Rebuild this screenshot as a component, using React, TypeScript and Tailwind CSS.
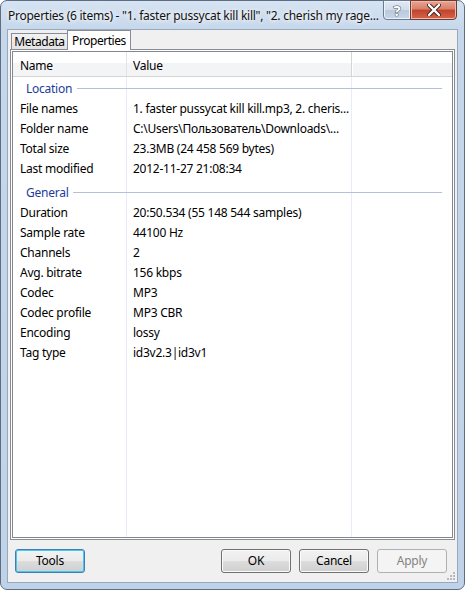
import React from "react";

const font = "font-['Noto_Sans',sans-serif] tracking-[-0.25px]";

const locationRows = [
  ["File names", "1. faster pussycat kill kill.mp3, 2. cheris..."],
  ["Folder name", "C:\\Users\\Пользователь\\Downloads\\..."],
  ["Total size", "23.3MB (24 458 569 bytes)"],
  ["Last modified", "2012-11-27 21:08:34"],
];

const generalRows = [
  ["Duration", "20:50.534 (55 148 544 samples)"],
  ["Sample rate", "44100 Hz"],
  ["Channels", "2"],
  ["Avg. bitrate", "156 kbps"],
  ["Codec", "MP3"],
  ["Codec profile", "MP3 CBR"],
  ["Encoding", "lossy"],
  ["Tag type", "id3v2.3|id3v1"],
];

function GroupRow({ title }: { title: string }) {
  return (
    <div className="flex h-[21px] items-center pl-[13px] pr-[10px]">
      <span className="text-[#1e3c9c]">{title}</span>
      <div className="ml-[5px] h-px flex-1 bg-[#b3c0da]" />
    </div>
  );
}

function DataRow({ name, value }: { name: string; value: string }) {
  return (
    <div className="flex h-[20px] items-center">
      <div className="w-[114px] shrink-0 pl-[7px] whitespace-nowrap">{name}</div>
      <div className="w-[225px] shrink-0 overflow-hidden pl-[6px] whitespace-nowrap">
        {value}
      </div>
    </div>
  );
}

function Button({
  label,
  kind = "normal",
}: {
  label: string;
  kind?: "normal" | "focus" | "disabled";
}) {
  let cls =
    "border-[#707070] bg-[linear-gradient(to_bottom,#f2f2f2_0%,#ebebeb_50%,#dddddd_50%,#cfcfcf_100%)] shadow-[inset_0_0_0_1px_#fbfbfb] text-black";
  if (kind === "focus")
    cls =
      "border-[#3c7fb1] bg-[linear-gradient(to_bottom,#f2f2f2_0%,#ebebeb_50%,#dddddd_50%,#cfcfcf_100%)] shadow-[inset_0_0_0_1px_#48c6f5] text-black";
  if (kind === "disabled")
    cls = "border-[#adb2b5] bg-[#f4f4f4] text-[#838383]";
  return (
    <button
      className={`flex h-[24px] w-[70px] items-center justify-center rounded-[3px] border text-[12px] ${cls}`}
    >
      {label}
    </button>
  );
}

export default function App() {
  return (
    <div
      className={`${font} flex h-[590px] w-[465px] flex-col rounded-[7px] border border-[#5d6d82] bg-[linear-gradient(to_bottom,#d5e3f2_0px,#c6d7eb_30px,#c0d2e7_100%)] px-[6px] pb-[6px] text-[12px] text-black`}
    >
      {/* title bar */}
      <div className="flex h-[28px] shrink-0 items-start">
        <div className="min-w-0 flex-1 self-center overflow-hidden pl-[1px] pt-[1px] whitespace-nowrap text-[#111] [text-shadow:0_0_6px_#fff,0_0_4px_#fff]">
          Properties (6 items) - "1. faster pussycat kill kill", "2. cherish my rage...
        </div>
        <div className="-mt-px mr-[1px] ml-[4px] flex shrink-0">
          <div className="flex h-[20px] w-[28px] items-center justify-center rounded-bl-[4px] border border-[#6a7a90] bg-[linear-gradient(to_bottom,#e1eaf4_0%,#d0dcea_50%,#b9c9dc_50%,#c7d6e7_100%)] shadow-[inset_0_0_0_1px_#eef3f9]">
            <span className="text-[15px] leading-none font-bold text-white [-webkit-text-stroke:1px_#3f4b5c] [paint-order:stroke]">
              ?
            </span>
          </div>
          <div className="-ml-px flex h-[20px] w-[47px] items-center justify-center rounded-br-[4px] border border-[#6b3b35] bg-[linear-gradient(to_bottom,#e9a58f_0%,#d7806a_45%,#c2432c_50%,#d46549_100%)] shadow-[inset_0_0_0_1px_#f0b9a9]">
            <svg width="14" height="12" viewBox="0 0 14 12">
              <path
                d="M2 1 L12 11 M12 1 L2 11"
                stroke="#3b2420"
                strokeWidth="4.2"
                strokeLinecap="round"
              />
              <path
                d="M2 1 L12 11 M12 1 L2 11"
                stroke="#ffffff"
                strokeWidth="2.4"
                strokeLinecap="round"
              />
            </svg>
          </div>
        </div>
      </div>

      {/* client area */}
      <div className="relative flex flex-1 flex-col border border-[#97a9be] bg-[#f0f0f0]">
        <div className="mx-[2px] flex flex-1 flex-col">
          {/* tabs */}
          <div className="flex h-[19px] items-end pl-[1px] tracking-[-0.45px]">
            <div className="flex h-[16px] w-[57px] items-center justify-center border border-b-0 border-[#898c95] bg-[linear-gradient(to_bottom,#f2f2f2,#e3e3e3)]">
              Metadata
            </div>
            <div className="relative z-10 -mb-px -ml-px flex h-[20px] w-[64px] items-start justify-center border border-b-0 border-[#898c95] bg-white pt-[1px]">
              Properties
            </div>
          </div>

          {/* panel */}
          <div className="flex flex-1 flex-col border border-[#898c95] bg-white p-px">
            <div className="flex flex-1 flex-col border border-[#828790] bg-white">
              {/* header */}
              <div className="flex h-[25px] shrink-0 border-b border-[#d5d5d5] bg-[linear-gradient(to_bottom,#ffffff_0%,#ffffff_44%,#f3f4f6_44%,#f3f4f6_100%)]">
                <div className="flex w-[114px] items-center border-r border-[#e3e4e6] pl-[7px] pt-[3px]">
                  Name
                </div>
                <div className="flex w-[225px] items-center border-r border-[#d5d5d5] pl-[6px] pt-[3px]">
                  Value
                </div>
                <div className="flex-1 border-l border-white" />
              </div>

              {/* body */}
              <div className="relative flex-1">
                <div className="pointer-events-none absolute inset-y-0 left-[113px] w-px bg-[#e6edf8]" />
                <div className="pointer-events-none absolute inset-y-0 left-[338px] w-px bg-[#e6edf8]" />
                <div className="relative pt-px">
                  <GroupRow title="Location" />
                  {locationRows.map(([n, v]) => (
                    <DataRow key={n} name={n} value={v} />
                  ))}
                  <div className="h-[3px]" />
                  <GroupRow title="General" />
                  {generalRows.map(([n, v]) => (
                    <DataRow key={n} name={n} value={v} />
                  ))}
                </div>
              </div>
            </div>
          </div>
        </div>

        {/* buttons */}
        <div className="flex shrink-0 items-center py-[9px] pl-[7px] pr-[10px]">
          <Button label="Tools" kind="focus" />
          <div className="flex-1" />
          <div className="flex gap-[8px]">
            <Button label="OK" />
            <Button label="Cancel" />
            <Button label="Apply" kind="disabled" />
          </div>
        </div>

        {/* resize grip */}
        <svg
          className="pointer-events-none absolute bottom-[1px] right-[1px]"
          width="10"
          height="10"
          viewBox="0 0 10 10"
        >
          {[
            [7, 1],
            [4, 4],
            [7, 4],
            [1, 7],
            [4, 7],
            [7, 7],
          ].map(([x, y]) => (
            <rect key={`${x}-${y}`} x={x} y={y} width="2" height="2" fill="#b5b9c0" />
          ))}
        </svg>
      </div>
    </div>
  );
}
